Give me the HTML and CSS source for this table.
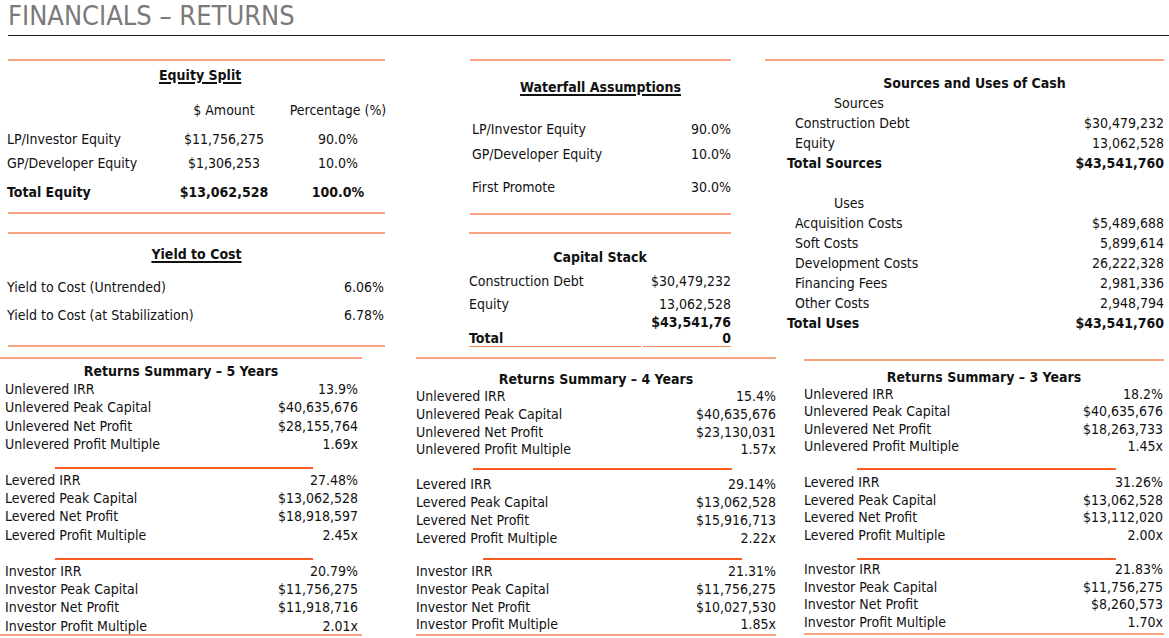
FILE: index.html
```html
<!DOCTYPE html>
<html>
<head>
<meta charset="utf-8">
<link rel="stylesheet" href="styles.css">
</head>
<body>
<div class="page">
  <header class="title">FINANCIALS – RETURNS</header>

  <div class="top">
    <section class="col col-left">
      <div class="box equity-box">
        <h2 class="box-title ul">Equity Split</h2>
        <div class="eq-row eq-head"><span></span><span class="c">$ Amount</span><span class="c">Percentage (%)</span></div>
        <div class="eq-row eq-lp"><span>LP/Investor Equity</span><span class="c">$11,756,275</span><span class="c">90.0%</span></div>
        <div class="eq-row eq-gp"><span>GP/Developer Equity</span><span class="c">$1,306,253</span><span class="c">10.0%</span></div>
        <div class="eq-row eq-total b"><span>Total Equity</span><span class="c">$13,062,528</span><span class="c">100.0%</span></div>
      </div>
      <div class="box yield-box">
        <h2 class="box-title ul yield-title">Yield to Cost</h2>
        <div class="kv yield-r1"><span>Yield to Cost (Untrended)</span><span>6.06%</span></div>
        <div class="kv yield-r2"><span>Yield to Cost (at Stabilization)</span><span>6.78%</span></div>
      </div>
    </section>

    <section class="col col-mid">
      <div class="box water-box">
        <h2 class="box-title ul water-title">Waterfall Assumptions</h2>
        <div class="kv w-r1"><span>LP/Investor Equity</span><span>90.0%</span></div>
        <div class="kv w-r2"><span>GP/Developer Equity</span><span>10.0%</span></div>
        <div class="kv w-r3"><span>First Promote</span><span>30.0%</span></div>
      </div>
      <div class="box cap-box">
        <h2 class="box-title cap-title">Capital Stack</h2>
        <div class="cap-row cap-r1"><span>Construction Debt</span><span class="r">$30,479,232</span></div>
        <div class="cap-row cap-r2"><span>Equity</span><span class="r">13,062,528</span></div>
        <div class="cap-row cap-r3 b"><span></span><span class="r">$43,541,76</span></div>
        <div class="cap-row cap-total b"><span class="cell">Total</span><span class="cell r">0</span></div>
      </div>
    </section>

    <section class="col col-right">
      <div class="box su-box">
        <h2 class="box-title su-title">Sources and Uses of Cash</h2>
        <div class="su-row su-sub"><span>Sources</span></div>
        <div class="su-row"><span class="su-item">Construction Debt</span><span>$30,479,232</span></div>
        <div class="su-row"><span class="su-item">Equity</span><span>13,062,528</span></div>
        <div class="su-row b"><span>Total Sources</span><span>$43,541,760</span></div>
        <div class="su-row su-blank"></div>
        <div class="su-row su-sub"><span>Uses</span></div>
        <div class="su-row"><span class="su-item">Acquisition Costs</span><span>$5,489,688</span></div>
        <div class="su-row"><span class="su-item">Soft Costs</span><span>5,899,614</span></div>
        <div class="su-row"><span class="su-item">Development Costs</span><span>26,222,328</span></div>
        <div class="su-row"><span class="su-item">Financing Fees</span><span>2,981,336</span></div>
        <div class="su-row"><span class="su-item">Other Costs</span><span>2,948,794</span></div>
        <div class="su-row b"><span>Total Uses</span><span>$43,541,760</span></div>
      </div>
    </section>
  </div>

  <div class="bottom">
    <section class="summary s5">
      <h3 class="s-title">Returns Summary – 5 Years</h3>
      <div class="group g1">
        <div class="kv"><span>Unlevered IRR</span><span>13.9%</span></div>
        <div class="kv"><span>Unlevered Peak Capital</span><span>$40,635,676</span></div>
        <div class="kv"><span>Unlevered Net Profit</span><span>$28,155,764</span></div>
        <div class="kv"><span>Unlevered Profit Multiple</span><span>1.69x</span></div>
      </div>
      <div class="divider d1"></div>
      <div class="group g2">
        <div class="kv"><span>Levered IRR</span><span>27.48%</span></div>
        <div class="kv"><span>Levered Peak Capital</span><span>$13,062,528</span></div>
        <div class="kv"><span>Levered Net Profit</span><span>$18,918,597</span></div>
        <div class="kv"><span>Levered Profit Multiple</span><span>2.45x</span></div>
      </div>
      <div class="divider d2"></div>
      <div class="group g3">
        <div class="kv"><span>Investor IRR</span><span>20.79%</span></div>
        <div class="kv"><span>Investor Peak Capital</span><span>$11,756,275</span></div>
        <div class="kv"><span>Investor Net Profit</span><span>$11,918,716</span></div>
        <div class="kv"><span>Investor Profit Multiple</span><span>2.01x</span></div>
      </div>
    </section>

    <section class="summary s4">
      <h3 class="s-title">Returns Summary – 4 Years</h3>
      <div class="group g1">
        <div class="kv"><span>Unlevered IRR</span><span>15.4%</span></div>
        <div class="kv"><span>Unlevered Peak Capital</span><span>$40,635,676</span></div>
        <div class="kv"><span>Unlevered Net Profit</span><span>$23,130,031</span></div>
        <div class="kv"><span>Unlevered Profit Multiple</span><span>1.57x</span></div>
      </div>
      <div class="divider d1"></div>
      <div class="group g2">
        <div class="kv"><span>Levered IRR</span><span>29.14%</span></div>
        <div class="kv"><span>Levered Peak Capital</span><span>$13,062,528</span></div>
        <div class="kv"><span>Levered Net Profit</span><span>$15,916,713</span></div>
        <div class="kv"><span>Levered Profit Multiple</span><span>2.22x</span></div>
      </div>
      <div class="divider d2"></div>
      <div class="group g3">
        <div class="kv"><span>Investor IRR</span><span>21.31%</span></div>
        <div class="kv"><span>Investor Peak Capital</span><span>$11,756,275</span></div>
        <div class="kv"><span>Investor Net Profit</span><span>$10,027,530</span></div>
        <div class="kv"><span>Investor Profit Multiple</span><span>1.85x</span></div>
      </div>
    </section>

    <section class="summary s3">
      <h3 class="s-title">Returns Summary – 3 Years</h3>
      <div class="group g1">
        <div class="kv"><span>Unlevered IRR</span><span>18.2%</span></div>
        <div class="kv"><span>Unlevered Peak Capital</span><span>$40,635,676</span></div>
        <div class="kv"><span>Unlevered Net Profit</span><span>$18,263,733</span></div>
        <div class="kv"><span>Unlevered Profit Multiple</span><span>1.45x</span></div>
      </div>
      <div class="divider d1"></div>
      <div class="group g2">
        <div class="kv"><span>Levered IRR</span><span>31.26%</span></div>
        <div class="kv"><span>Levered Peak Capital</span><span>$13,062,528</span></div>
        <div class="kv"><span>Levered Net Profit</span><span>$13,112,020</span></div>
        <div class="kv"><span>Levered Profit Multiple</span><span>2.00x</span></div>
      </div>
      <div class="divider d2"></div>
      <div class="group g3">
        <div class="kv"><span>Investor IRR</span><span>21.83%</span></div>
        <div class="kv"><span>Investor Peak Capital</span><span>$11,756,275</span></div>
        <div class="kv"><span>Investor Net Profit</span><span>$8,260,573</span></div>
        <div class="kv"><span>Investor Profit Multiple</span><span>1.70x</span></div>
      </div>
    </section>
  </div>
</div>
</body>
</html>
```

FILE: styles.css
```css
* { box-sizing: border-box; }

html, body {
  margin: 0;
  padding: 0;
  background: #ffffff;
}

body {
  font-family: "DejaVu Sans Condensed", "DejaVu Sans", sans-serif;
  font-size: 14px;
  color: #111111;
  width: 1169px;
  height: 638px;
  overflow: hidden;
}

.page {
  display: flex;
  flex-direction: column;
}

.title {
  height: 36px;
  margin-left: 8px;
  border-bottom: 1px solid #1a1a1a;
  font-size: 27px;
  line-height: 32px;
  color: #7a7a7a;
}

.b { font-weight: bold; }
.c { text-align: center; }
.r { text-align: right; }

/* ---------- top row ---------- */
.top {
  display: grid;
  grid-template-columns: 378px 346px 433px;
  margin-left: 7px;
  align-items: start;
}

.col-mid { margin-left: 85px; }
.col-right { margin-left: 34px; }

.box {
  border-top: 2px solid #f9a27e;
}

.box-title {
  margin: 0;
  font-size: 14px;
  font-weight: bold;
  line-height: 20px;
  text-align: center;
}

.ul {
  text-decoration: underline;
  text-decoration-thickness: 1.5px;
  text-underline-offset: 2px;
}

.kv {
  display: flex;
  justify-content: space-between;
  line-height: 20px;
  white-space: nowrap;
}

/* equity split */
.equity-box {
  margin-top: 23px;
  margin-left: 1px;
  width: 377px;
  padding-bottom: 10px;
  border-bottom: 2px solid #f9a27e;
}
.equity-box .box-title {
  margin-top: 4px;
  text-align: left;
  padding-left: 151px;
}

.eq-row {
  display: grid;
  grid-template-columns: 169px 96px 10px 112px;
  line-height: 20px;
  margin-left: -1px;
  white-space: nowrap;
}
.eq-row span:nth-child(3) { grid-column: 4; }

.eq-head { margin-top: 15px; }
.eq-lp { margin-top: 9px; }
.eq-gp { margin-top: 4px; }
.eq-total { margin-top: 9px; }

/* yield to cost */
.yield-box {
  margin-top: 18px;
  margin-left: 1px;
  width: 377px;
  padding-bottom: 20px;
  border-bottom: 2px solid #f9a27e;
}
.yield-title { margin-top: 10px; }
.yield-box .kv { margin-left: -1px; padding-right: 1px; }
.yield-r1 { margin-top: 13px; }
.yield-r2 { margin-top: 8px; }

/* waterfall */
.water-box {
  margin-top: 23px;
  width: 261px;
  padding-bottom: 16px;
  border-bottom: 2px solid #f9a27e;
}
.water-title { margin-top: 16px; }
.water-box .kv { padding-left: 2px; }
.w-r1 { margin-top: 22px; }
.w-r2 { margin-top: 5px; }
.w-r3 { margin-top: 13px; }

/* capital stack */
.cap-box {
  margin-top: 17px;
  width: 262px;
  margin-left: -1px;
}
.cap-title { margin-top: 13px; }
.cap-row {
  display: grid;
  grid-template-columns: 172px 88px;
  column-gap: 2px;
  white-space: nowrap;
  line-height: 20px;
}
.cap-r1 { margin-top: 4px; }
.cap-r2 { margin-top: 5px; line-height: 17px; }
.cap-r3 { line-height: 16px; margin-top: 1px; }
.cap-total { line-height: 16px; height: 14px; }
.cap-total .cell { border-bottom: 1.5px solid #f58a58; }

/* sources and uses */
.su-box {
  margin-top: 23px;
  width: 399px;
}
.su-title { margin-top: 12px; padding-left: 20px; }
.su-row {
  display: flex;
  justify-content: space-between;
  height: 20px;
  line-height: 20px;
  padding-left: 22px;
  white-space: nowrap;
}
.su-item { padding-left: 8px; }
.su-sub span { padding-left: 47px; }

/* ---------- bottom row ---------- */
.bottom {
  display: grid;
  grid-template-columns: 416px 388px 365px;
  align-items: start;
}

.summary {
  border-top: 2px solid #f9a27e;
  border-bottom: 2px solid #f9a27e;
  --row: 18px;
}
.summary .kv { line-height: var(--row); height: var(--row); }

.s-title {
  margin: 0;
  font-size: 14px;
  line-height: 18px;
  font-weight: bold;
  text-align: center;
}

.divider {
  height: 2px;
  width: 259px;
  background: #ff5a1f;
}

.s5 {
  width: 362px;
  margin-top: 10px;
  --row: 18.33px;
}
.s5 .s-title { margin-top: 3px; }
.s5 .kv { padding-left: 5px; padding-right: 4px; }
.s5 .d1 { margin-top: 14px; margin-left: 55px; width: 258px; }
.s5 .g2 { margin-top: 1.5px; }
.s5 .d2 { margin-top: 14px; margin-left: 55px; width: 258px; }
.s5 .g3 { margin-top: 1.5px; margin-bottom: -1px; }

.s4 {
  width: 360px;
  margin-top: 10px;
  --row: 17.8px;
}
.s4 .s-title { margin-top: 11px; }
.s4 .d1 { margin-top: 8.5px; margin-left: 57px; }
.s4 .g2 { margin-top: 6.6px; }
.s4 .d2 { margin-top: 11px; margin-left: 67px; }
.s4 .g3 { margin-top: 2.5px; }

.s3 {
  width: 360px;
  margin-top: 12px;
  --row: 17.5px;
}
.s3 .s-title { margin-top: 6.7px; }
.s3 .d1 { margin-top: 12px; margin-left: 53px; }
.s3 .g2 { margin-top: 4.8px; }
.s3 .d2 { margin-top: 13.75px; margin-left: 53px; }
.s3 .g3 { margin-top: 1px; margin-bottom: 2px; }
.s3 .kv { padding-right: 1px; }
```
